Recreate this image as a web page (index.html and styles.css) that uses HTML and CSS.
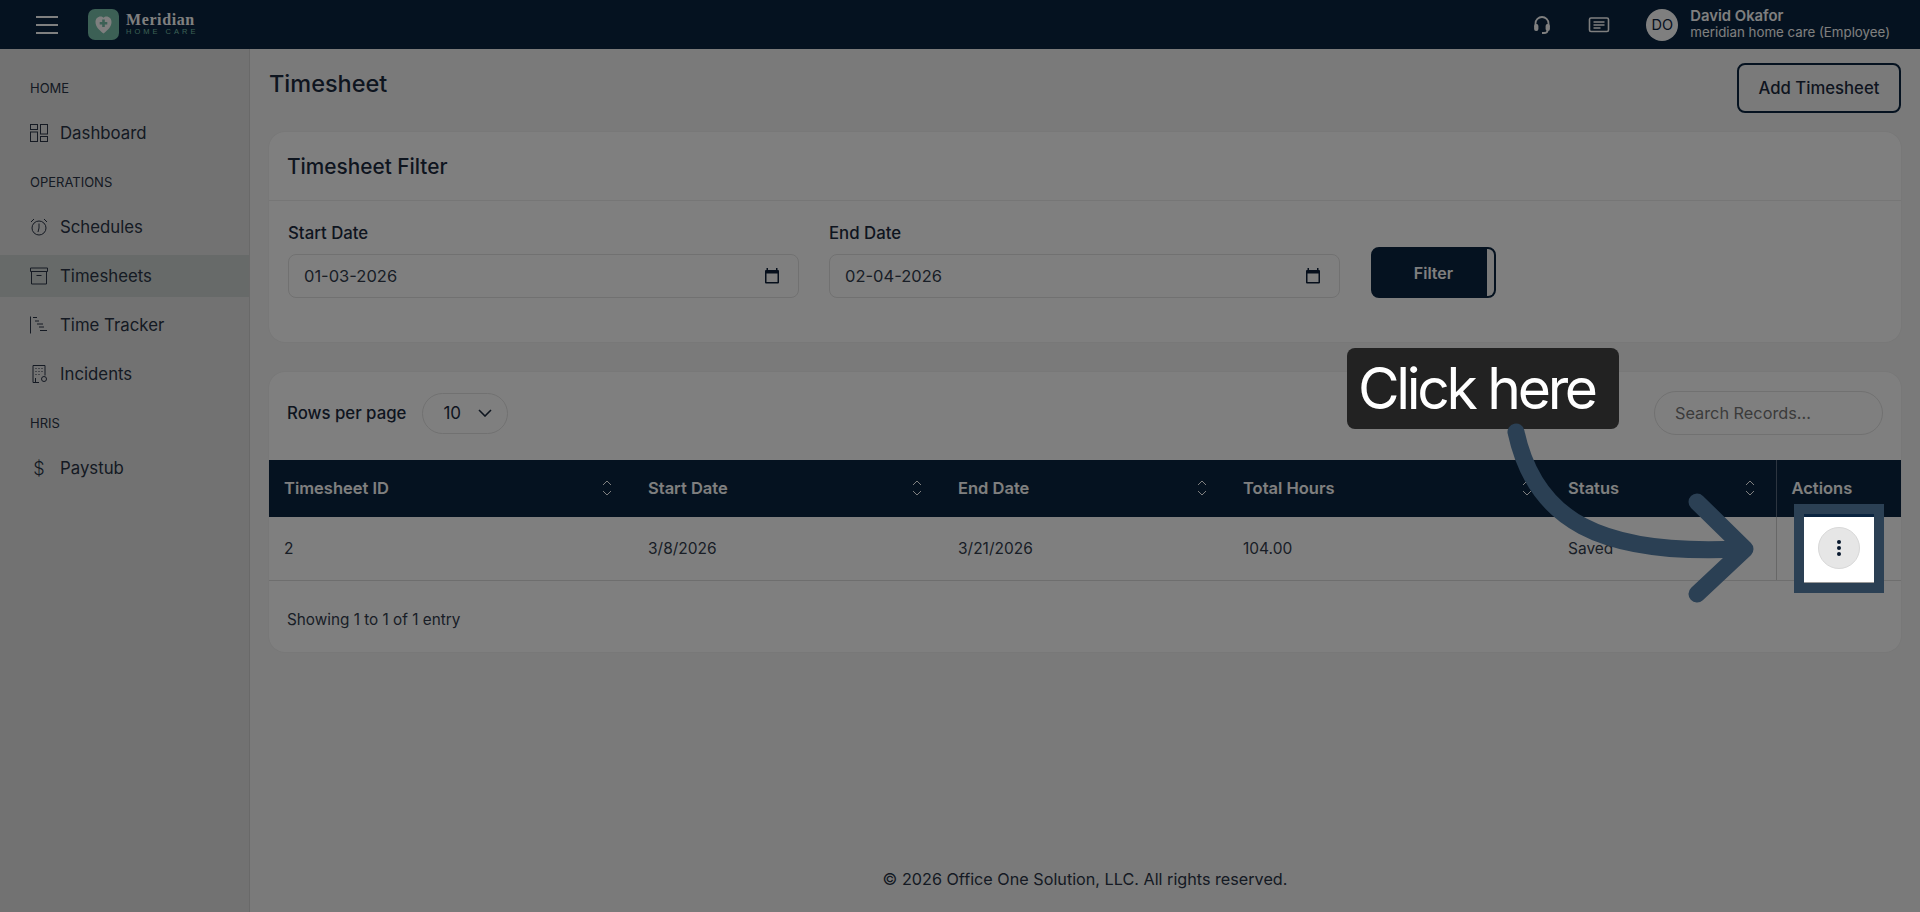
FILE: index.html
```html
<!DOCTYPE html>
<html lang="en">
  <head>
    <meta charset="UTF-8" />
    <title>Timesheet</title>
    <link rel="stylesheet" href="styles.css">
  </head>
  <body>
    <header class="topbar">
      <div class="topbar-left">
        <button class="burger" aria-label="Menu"><span></span><span></span><span></span></button>
        <div class="brand">
          <svg class="brand-mark" width="31" height="31" viewBox="0 0 31 31">
            <rect width="31" height="31" rx="7" fill="#78c0aa"></rect>
            <path d="M15.500 24.500C11 21 7.500 17.500 7.500 13c0-3.200 2.300-5.500 5-5.500 1.200 0 2.300.4 3 1.200.7-.8 1.800-1.200 3-1.200 2.700 0 5 2.300 5 5.500 0 4.500-3.500 8-8 11.500z" fill="#fff"></path>
            <path d="M14.200 10.500h2.600v2.500h2.500v2.500h-2.500V18h-2.600v-2.500h-2.500V13h2.500z" fill="#78c0aa"></path>
          </svg>
          <div class="brand-text">
            <div class="brand-name">Meridian</div>
            <div class="brand-sub">HOME CARE</div>
          </div>
        </div>
      </div>
      <div class="topbar-right">
        <svg class="top-icon" width="20" height="20" viewBox="0 0 20 20" fill="none" stroke="#fff" stroke-width="1.800">
          <path d="M3.500 12V8.500a6.500 6.500 0 0 1 13 0V12"></path>
          <rect x="3" y="10" width="2.500" height="5" rx="1" fill="#fff"></rect>
          <rect x="14.500" y="10" width="2.500" height="5" rx="1" fill="#fff"></rect>
          <path d="M15.500 15.500c0 1.800-1.500 2.500-3.500 2.500H10"></path>
        </svg>
        <svg class="top-icon msg-icon" width="22" height="18" viewBox="0 0 22 18" fill="none" stroke="#fff" stroke-width="1.600">
          <rect x="1.500" y="2" width="19" height="13.500" rx="1.500"></rect>
          <path d="M5.500 6h11M5.500 9h11M5.500 12h7"></path>
        </svg>
        <div class="avatar">DO</div>
        <div class="user">
          <div class="user-name">David Okafor</div>
          <div class="user-role">meridian home care (Employee)</div>
        </div>
      </div>
    </header>

    <div class="layout">
      <aside class="sidebar">
        <div class="nav-heading">HOME</div>
        <a class="nav-item">
          <svg width="18" height="18" viewBox="0 0 18 18" fill="none" stroke="currentColor" stroke-width="1">
            <rect x="0.500" y="0.500" width="7" height="5"></rect>
            <rect x="0.500" y="8" width="7" height="9.500"></rect>
            <rect x="10.500" y="0.500" width="7" height="9.500"></rect>
            <rect x="10.500" y="12.500" width="7" height="5"></rect>
          </svg>
          Dashboard
        </a>
        <div class="nav-heading">OPERATIONS</div>
        <a class="nav-item">
          <svg width="18" height="18" viewBox="0 0 18 18" fill="none" stroke="currentColor" stroke-width="1">
            <circle cx="9" cy="10" r="7"></circle>
            <path d="M9 5.500V10l-1 4M1 4l3-3M17 4l-3-3"></path>
          </svg>
          Schedules
        </a>
        <a class="nav-item active">
          <svg width="18" height="18" viewBox="0 0 18 18" fill="none" stroke="currentColor" stroke-width="1">
            <path d="M0.500 1h17v3.500H0.500zM1.500 4.500V17h15V4.500M6.500 8.500h5"></path>
          </svg>
          Timesheets
        </a>
        <a class="nav-item">
          <svg width="18" height="18" viewBox="0 0 18 18" fill="none" stroke="currentColor" stroke-width="1">
            <path d="M0.500 0.500v17M3 1.500h4M5 5h4M7 8h6M9 11h5M10 14.500h7"></path>
          </svg>
          Time Tracker
        </a>
        <a class="nav-item">
          <svg width="18" height="18" viewBox="0 0 18 18" fill="none" stroke="currentColor" stroke-width="1">
            <path d="M9 17.500H3V0.500h12v10"></path>
            <path d="M5.500 3.500h1M8.500 3.500h1M11.500 3.500h1M5.500 6.500h1M8.500 6.500h1M11.500 6.500h1M5.500 9.500h1M8.500 9.500h1M5.500 13v4"></path>
            <circle cx="14" cy="14" r="2.500"></circle>
          </svg>
          Incidents
        </a>
        <div class="nav-heading">HRIS</div>
        <a class="nav-item">
          <span class="nav-glyph">$</span>
          Paystub
        </a>
      </aside>

      <main class="main">
        <div class="page-head">
          <h1>Timesheet</h1>
          <button class="btn-outline">Add Timesheet</button>
        </div>

        <section class="card filter-card">
          <div class="card-head">Timesheet Filter</div>
          <div class="filter-row">
            <div class="field">
              <label>Start Date</label>
              <div class="date-input">
                01-03-2026
                <svg width="14" height="16" viewBox="0 0 14 16"><path d="M3 0v2h8V0h1.500v2H13a1 1 0 0 1 1 1v11.500a1 1 0 0 1-1 1H1a1 1 0 0 1-1-1V3a1 1 0 0 1 1-1h.5V0zM1.500 5.500v8.500h11V5.500z" fill="#0d1f38"></path></svg>
              </div>
            </div>
            <div class="field">
              <label>End Date</label>
              <div class="date-input">
                02-04-2026
                <svg width="14" height="16" viewBox="0 0 14 16"><path d="M3 0v2h8V0h1.500v2H13a1 1 0 0 1 1 1v11.500a1 1 0 0 1-1 1H1a1 1 0 0 1-1-1V3a1 1 0 0 1 1-1h.5V0zM1.500 5.500v8.500h11V5.500z" fill="#0d1f38"></path></svg>
              </div>
            </div>
            <button class="btn-filter">Filter</button>
          </div>
        </section>

        <section class="card table-card">
          <div class="table-tools">
            <div class="rows-per-page">
              <span>Rows per page</span>
              <div class="rows-select">
                10
                <svg width="14" height="8" viewBox="0 0 14 8" fill="none" stroke="#1d2b3f" stroke-width="1.600"><path d="M1 1l6 6 6-6"></path></svg>
              </div>
            </div>
            <div class="search">Search Records...</div>
          </div>
          <table class="records">
            <thead>
              <tr>
                <th class="col-id"><div class="th-inner">Timesheet ID <svg class="sort" width="10" height="16" viewBox="0 0 10 16" fill="none" stroke="#fff" stroke-width="1"><path d="M1 5l4-4 4 4M1 11l4 4 4-4"></path></svg></div></th>
                <th class="col-start"><div class="th-inner">Start Date <svg class="sort" width="10" height="16" viewBox="0 0 10 16" fill="none" stroke="#fff" stroke-width="1"><path d="M1 5l4-4 4 4M1 11l4 4 4-4"></path></svg></div></th>
                <th class="col-end"><div class="th-inner">End Date <svg class="sort" width="10" height="16" viewBox="0 0 10 16" fill="none" stroke="#fff" stroke-width="1"><path d="M1 5l4-4 4 4M1 11l4 4 4-4"></path></svg></div></th>
                <th class="col-hours"><div class="th-inner">Total Hours <svg class="sort" width="10" height="16" viewBox="0 0 10 16" fill="none" stroke="#fff" stroke-width="1"><path d="M1 5l4-4 4 4M1 11l4 4 4-4"></path></svg></div></th>
                <th class="col-status"><div class="th-inner">Status <svg class="sort" width="10" height="16" viewBox="0 0 10 16" fill="none" stroke="#fff" stroke-width="1"><path d="M1 5l4-4 4 4M1 11l4 4 4-4"></path></svg></div></th>
                <th class="col-actions">Actions</th>
              </tr>
            </thead>
            <tbody>
              <tr>
                <td>2</td>
                <td>3/8/2026</td>
                <td>3/21/2026</td>
                <td>104.00</td>
                <td>Saved</td>
                <td class="actions-cell">
                  <button class="kebab" aria-label="Actions"><span></span><span></span><span></span></button>
                </td>
              </tr>
            </tbody>
          </table>
          <div class="table-foot">Showing 1 to 1 of 1 entry</div>
        </section>

        <footer class="page-foot">© 2026 Office One Solution, LLC. All rights reserved.</footer>
      </main>
    </div>

    <!-- guide overlay -->
    <div class="spotlight"></div>
    <div class="callout">Click here</div>
    <svg class="guide-arrow" width="1920" height="912" viewBox="0 0 1920 912" fill="none" stroke="#2b4054" stroke-width="17" stroke-linecap="round" stroke-linejoin="round">
      <path d="M1516 432C1535 520 1600 556 1740 549"></path>
      <path d="M1697 502L1745 549L1697 594"></path>
    </svg>
  </body>
</html>
```

FILE: styles.css
```css
* {
  margin: 0;
  padding: 0;
  box-sizing: border-box;
  font-family: "Inter", "Noto Sans", sans-serif;
}

html,
body {
  height: 912px;
  overflow: hidden;
}

body {
  background-color: #f5f5f5;
  color: #1d2b3f;
  position: relative;
}

.topbar {
  height: 49px;
  background-color: #0a2440;
  display: flex;
  justify-content: space-between;
  align-items: center;
  padding: 0 30px 0 36px;
  color: white;
}

.topbar-left,
.topbar-right {
  display: flex;
  align-items: center;
}

.burger {
  width: 22px;
  height: 18px;
  background: none;
  border: none;
  display: flex;
  flex-direction: column;
  justify-content: space-between;
  margin-right: 30px;
}

.burger span {
  display: block;
  height: 2px;
  background-color: white;
}

.brand {
  display: flex;
  align-items: center;
  gap: 7px;
}

.brand-name {
  font-family: "Liberation Serif", serif;
  font-weight: 700;
  font-size: 16px;
  letter-spacing: 0.6px;
  line-height: 15px;
}

.brand-sub {
  font-family: "Liberation Sans", sans-serif;
  font-size: 7.500px;
  letter-spacing: 3px;
  line-height: 10px;
  color: #78c0aa;
}

.top-icon {
  display: block;
}

.msg-icon {
  margin-left: 36px;
}

.avatar {
  width: 32px;
  height: 32px;
  border-radius: 50%;
  background-color: white;
  color: #0a2440;
  font-size: 14.500px;
  display: flex;
  align-items: center;
  justify-content: center;
  margin-left: 36px;
}

.user {
  margin-left: 12px;
  margin-top: -2px;
}

.user-name {
  font-size: 14.800px;
  font-weight: 600;
  line-height: 17px;
}

.user-role {
  font-size: 13.300px;
  line-height: 15px;
}

.layout {
  display: flex;
  height: 863px;
}

.sidebar {
  width: 250px;
  flex-shrink: 0;
  background-color: #e5e5e5;
  border-right: 1px solid #d2d2d2;
  padding-top: 17px;
}

.nav-heading {
  font-size: 13px;
  line-height: 18px;
  padding: 12px 30px 15px;
  color: #2a3446;
}

.sidebar .nav-heading:first-child {
  padding-top: 13px;
  padding-bottom: 15px;
}

.nav-item {
  display: flex;
  align-items: center;
  gap: 12px;
  height: 42px;
  margin-bottom: 7px;
  padding-left: 30px;
  font-size: 16.800px;
  color: #2a3446;
}

.nav-item.active {
  background-color: #ced4d2;
}

.nav-glyph {
  width: 18px;
  text-align: center;
  font-size: 18px;
  font-weight: 300;
}

.main {
  flex: 1;
  display: flex;
  flex-direction: column;
  padding: 14px 19px 0;
}

.page-head {
  display: flex;
  justify-content: space-between;
  height: 50px;
  margin-bottom: 19px;
}

h1 {
  font-size: 23.500px;
  font-weight: 500;
  line-height: 42px;
}

.btn-outline {
  width: 164px;
  height: 50px;
  background: none;
  border: 2px solid #0a2440;
  border-radius: 8px;
  font-size: 16.700px;
  font-weight: 500;
  color: #1d2b3f;
}

.card {
  background-color: white;
  border-radius: 16px;
  box-shadow: 0 0 2px rgba(0, 0, 0, 0.08);
}

.filter-card {
  height: 210px;
  margin-bottom: 30px;
}

.card-head {
  height: 69px;
  padding: 0 18px;
  border-bottom: 1px solid #ececec;
  display: flex;
  align-items: center;
  font-size: 20.800px;
  font-weight: 500;
}

.filter-row {
  display: flex;
  align-items: flex-end;
  padding: 21px 19px 0;
}

.field {
  width: 511px;
  margin-right: 30px;
}

label {
  display: block;
  font-size: 16.800px;
  font-weight: 500;
  line-height: 22px;
  margin-bottom: 10px;
}

.date-input {
  height: 44px;
  border: 1px solid #e2e2e2;
  border-radius: 8px;
  padding: 0 19px 0 15px;
  display: flex;
  justify-content: space-between;
  align-items: center;
  font-size: 16.500px;
  color: #333d4d;
}

.btn-filter {
  position: relative;
  width: 125px;
  height: 51px;
  margin-left: 1px;
  background-color: #0a2440;
  border: 2px solid #0a2440;
  border-radius: 8px;
  color: white;
  font-size: 16px;
  font-weight: 600;
}

/* leftover of the hover slide, the screenshot has it frozen */
.btn-filter::after {
  content: "";
  position: absolute;
  top: 0;
  bottom: 0;
  right: 0;
  width: 7px;
  background-color: #f5f5f5;
  border-radius: 0 6px 6px 0;
}

.table-card {
  height: 280px;
}

.table-tools {
  height: 82px;
  margin-bottom: 6px;
  padding: 0 18px;
  display: flex;
  justify-content: space-between;
  align-items: center;
}

.rows-per-page {
  display: flex;
  align-items: center;
  gap: 16px;
  font-size: 16.800px;
  font-weight: 500;
}

.rows-select {
  width: 86px;
  height: 41px;
  border: 1px solid #e2e2e2;
  border-radius: 21px;
  padding: 0 15px 0 20px;
  display: flex;
  justify-content: space-between;
  align-items: center;
  font-size: 17px;
  font-weight: 400;
}

.search {
  width: 229px;
  height: 44px;
  border: 1px solid #e2e2e2;
  border-radius: 22px;
  padding-left: 20px;
  display: flex;
  align-items: center;
  font-size: 16.300px;
  color: #777;
}

.records {
  width: 100%;
  table-layout: fixed;
  border-collapse: collapse;
}

.col-id { width: 364px; }
.col-start { width: 310px; }
.col-end { width: 285px; }
.col-hours { width: 325px; }
.col-status { width: 223px; }
.col-actions { width: 125px; border-left: 1px solid #5a6a80; }

th {
  height: 57px;
  background-color: #0a2440;
  color: white;
  font-size: 16.500px;
  font-weight: 600;
  text-align: left;
  padding: 0 21px 2px 15px;
}

.th-inner {
  display: flex;
  justify-content: space-between;
  align-items: center;
}

td {
  height: 63px;
  padding-left: 15px;
  font-size: 15.500px;
  color: #333d4d;
  border-bottom: 1px solid #dcdcdc;
}

.actions-cell {
  border-left: 1px solid #cfcfcf;
  padding: 0;
  text-align: center;
}

.kebab {
  width: 42px;
  height: 42px;
  border-radius: 50%;
  background-color: #e6e6e6;
  border: 1px solid #d8d8d8;
  display: inline-flex;
  flex-direction: column;
  align-items: center;
  justify-content: center;
  gap: 2px;
  vertical-align: middle;
}

.kebab span {
  width: 4px;
  height: 4px;
  border-radius: 50%;
  background-color: #08182e;
}

.table-foot {
  padding: 29px 18px 0;
  font-size: 15.300px;
  color: #333d4d;
}

.page-foot {
  margin-top: auto;
  height: 43px;
  text-align: center;
  font-size: 16.200px;
  color: #2a3446;
}

/* guide overlay */
.spotlight {
  position: absolute;
  left: 1804px;
  top: 514px;
  width: 70px;
  height: 69px;
  box-shadow: 0 0 0 10px #2b4054, 0 0 0 3000px rgba(0, 0, 0, 0.5);
}

/* the row line sits lower in the highlighted crop */
.spotlight::after {
  content: "";
  position: absolute;
  left: 0;
  right: 0;
  bottom: 0;
  height: 4px;
  background-color: white;
  border-bottom: 1px solid #999;
}

.callout {
  position: absolute;
  left: 1347px;
  top: 348px;
  width: 272px;
  height: 81px;
  padding-left: 11px;
  background-color: #222;
  border-radius: 8px;
  color: white;
  font-size: 57px;
  letter-spacing: -3.300px;
  line-height: 81px;
}

.guide-arrow {
  position: absolute;
  left: 0;
  top: 0;
}
```
